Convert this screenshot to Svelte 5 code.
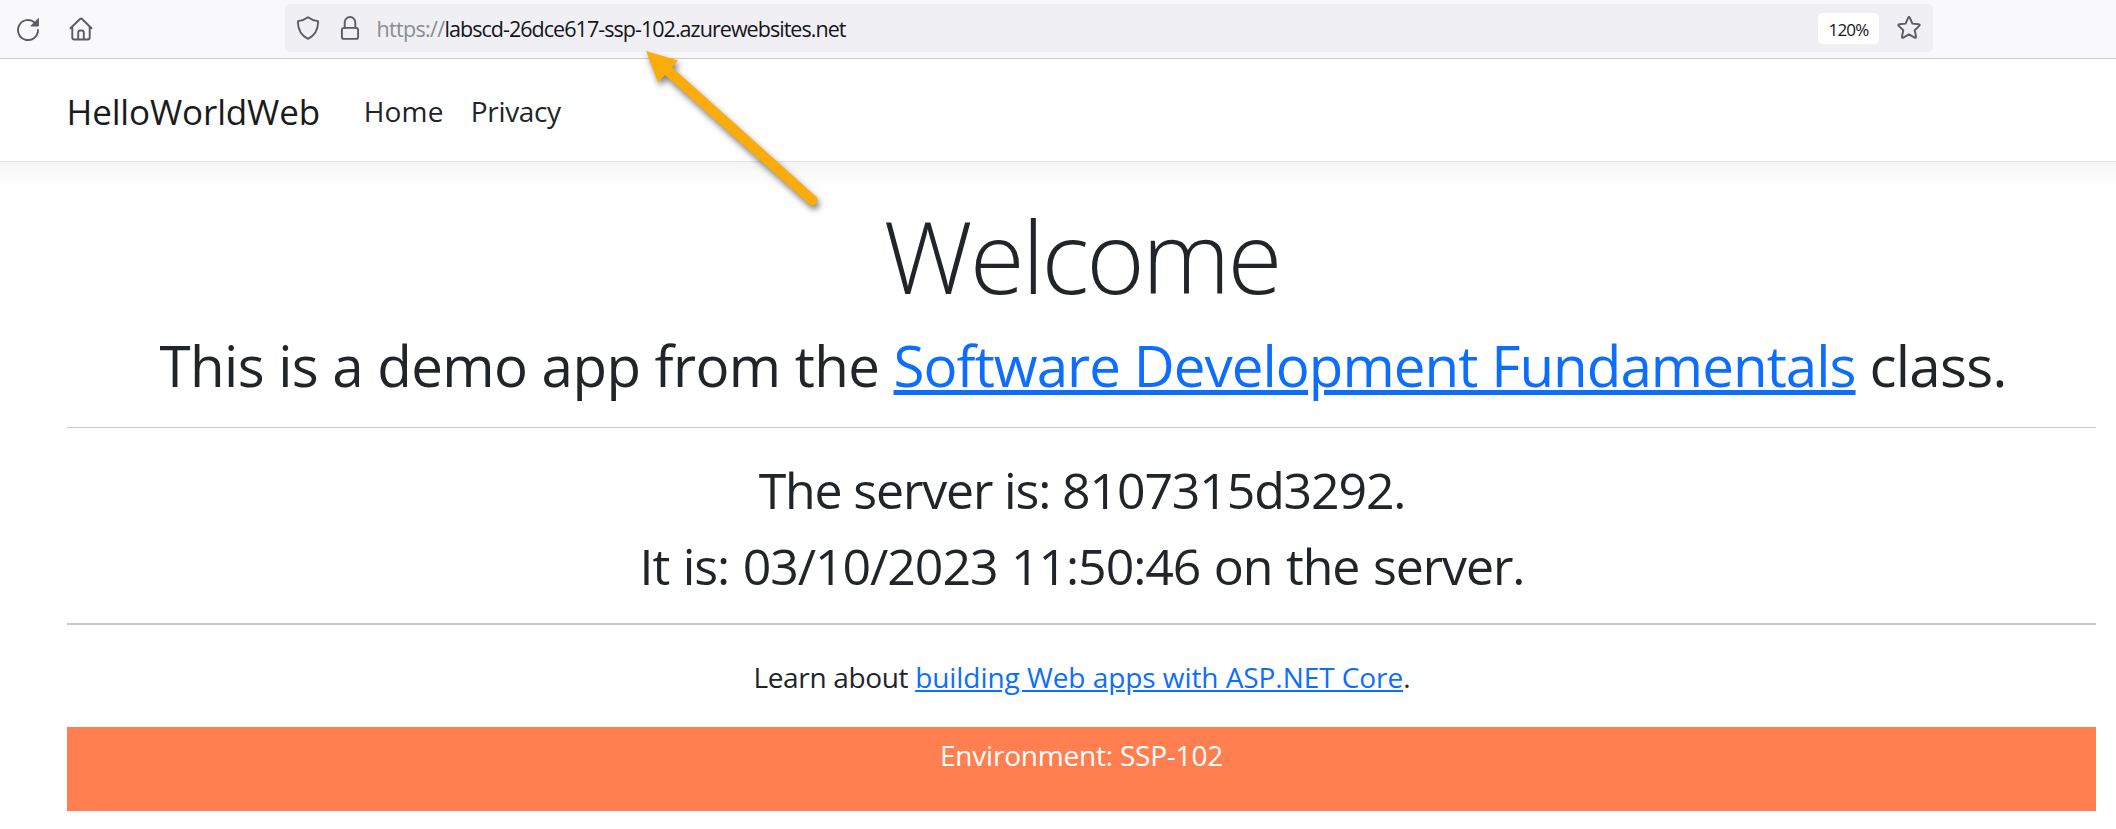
<script>
  const server = '8107315d3292';
  const time = '03/10/2023 11:50:46';
  const environment = 'SSP-102';
</script>

<div class="toolbar">
  <svg class="reload" viewBox="0 0 24 24"><path d="M22 13a10 10 0 1 1-3.200-7.300" /><path class="solid" d="M22.400 1.800v7.200h-7.200z" /></svg>
  <svg class="home" viewBox="0 0 24 24"><path d="M1.500 11.300 11 2q1-.9 2 0l9.500 9.300M3.300 9.800v10.700q0 2 2 2h13.400q2 0 2-2v-10.700M9.200 22v-6.500q0-2 2-2h1.600q2 0 2 2v6.500" /></svg>
  <div class="urlbar">
    <svg class="shield" viewBox="0 0 24 24"><path d="M12 1.200c2.600 2 6 3.300 9.800 3.900q.5.100.400.700c-.3 7.500-3.300 14-10.200 17-6.900-3-9.900-9.500-10.200-17q0-.6.400-.7c3.800-.6 7.200-1.900 9.800-3.900z" /></svg>
    <svg class="lock" viewBox="0 0 24 24"><rect x="3.900" y="11.900" width="16.200" height="11" rx="2" /><path d="M6.700 11.900v-5.600a5.300 5.300 0 0 1 10.600 0v5.600" /></svg>
    <div class="url"><span class="scheme">https://</span><span class="host">labscd-26dce617-ssp-102.azurewebsites.net</span></div>
    <div class="zoom">120%</div>
    <svg class="star" viewBox="0 0 24 24"><path d="M11.100 1.800q.9-1.600 1.800 0l2.500 5.800 6.300.7q1.700.3.600 1.600l-4.600 4.300 1.300 6.300q.2 1.800-1.300 1.100l-5.700-3.200-5.700 3.200q-1.500.7-1.300-1.100l1.300-6.300-4.600-4.300q-1.100-1.300.6-1.600l6.300-.7z" /></svg>
  </div>
</div>
<nav>
  <a class="brand" href="#top">HelloWorldWeb</a>
  <a class="item" href="#home">Home</a>
  <a class="item privacy" href="#privacy">Privacy</a>
</nav>
<main>
  <h1>Welcome</h1>
  <h2><span class="intro">{'This is a demo app from the '}</span><a class="course" href="#class">Software Development Fundamentals</a><span class="outro">{' class.'}</span></h2>
  <hr />
  <div class="server">
    <p class="name">The server is: {server}.</p>
    <p class="time">It is: {time} on the server.</p>
  </div>
  <hr class="thick" />
  <p class="learn"><span class="about">{'Learn about '}</span><a class="docs" href="#core">building Web apps with ASP.NET Core</a>.</p>
  <div class="env">Environment: {environment}</div>
</main>
<svg class="arrow" viewBox="0 0 200 180"><path d="m6 11 32 9.500-6 6.700L176.200 156.700a5.200 5.200 0 0 1-7 7.600L25 35l-7 7z" /></svg>

<style>
  :global(body) { background: #fff; font-family: 'Open Sans', 'Noto Sans', sans-serif; color: #212529; }
  :global(#app) { position: relative; height: 829px; overflow: hidden; }
  svg { display: block; flex: none; fill: none; stroke: #5b5b66; stroke-width: 1.9; stroke-linejoin: round; stroke-linecap: round; }
  span, a { white-space: pre; }
  .toolbar { box-sizing: border-box; height: 59px; display: flex; background: #f9f9fb; border-bottom: 1px solid #ccccce; }
  .reload { width: 24px; height: 24px; margin: 17px 0 0 16px; }
  .solid { fill: #5b5b66; stroke-width: 1; }
  .home { width: 24px; height: 24px; margin: 17px 0 0 29px; }
  .urlbar { box-sizing: border-box; width: 1648px; height: 48px; margin: 4px 0 0 192px; padding: 0 12px 0 11px; display: flex; align-items: center; background: #f0f0f4; border-radius: 5px; }
  .shield, .lock, .star { width: 24px; height: 24px; }
  .lock { margin-left: 18px; }
  .url { flex: 1; margin-left: 14.500px; padding-top: 2px; font-size: 21.500px; line-height: 48px; }
  .scheme { color: #8b8b92; letter-spacing: -.668px; }
  .host { color: #15141a; letter-spacing: -.96px; }
  .zoom { width: 61px; height: 31px; margin-right: 18px; border-radius: 5px; background: #fff; color: #15141a; font-size: 17px; line-height: 33px; letter-spacing: -.8px; text-align: center; }
  nav { box-sizing: border-box; height: 103px; padding: 2px 0 0 66.500px; display: flex; align-items: center; border-bottom: 1px solid #dee2e6; }
  nav a { text-decoration: none; color: #212529; }
  .brand { font-size: 35px; color: #1b1b1c; letter-spacing: -.154px; }
  .item { margin-left: 43.800px; font-size: 28px; letter-spacing: .14px; }
  .privacy { margin-left: 27.300px; letter-spacing: -.335px; }
  main { padding: 33px 20px 0 67px; text-align: center; background: linear-gradient(rgba(0, 0, 0, .043), rgba(0, 0, 0, .019) 12px, rgba(0, 0, 0, .004) 24px, transparent 29px); }
  h1, h2, p { margin: 0; font-weight: 400; }
  h1 { font-size: 100px; line-height: 120px; font-weight: 300; letter-spacing: -2.882px; }
  h2 { padding: 1px 0 0 3px; font-size: 56.500px; line-height: 99px; white-space: nowrap; }
  .intro { letter-spacing: -.58px; }
  .course { letter-spacing: -.958px; }
  .outro { letter-spacing: -.728px; }
  main a { color: #0d6efd; text-decoration: underline; }
  hr { border: 0; height: 1px; margin: 12px 0 24px; background: #c8c8c9; }
  hr.thick { height: 2px; margin: 19px 0 31px; }
  .server { font-size: 50px; line-height: 76px; }
  .name { padding-left: 1px; letter-spacing: -1.15px; }
  .time { padding-left: 1px; letter-spacing: -1.060px; word-spacing: 1.600px; }
  .learn { padding-left: 1px; font-size: 28px; line-height: 42px; }
  .about { letter-spacing: -.338px; }
  .docs { letter-spacing: -.061px; }
  .env { box-sizing: border-box; height: 84px; margin-top: 29px; padding-top: 7px; background: #ff7f50; color: #fff; font-size: 28px; line-height: 42px; letter-spacing: -.213px; }
  .arrow { position: absolute; left: 640px; top: 40px; width: 200px; height: 180px; fill: #f9ac0b; stroke: none; filter: drop-shadow(2px 4px 3px rgba(0, 0, 0, .5)); }
</style>
